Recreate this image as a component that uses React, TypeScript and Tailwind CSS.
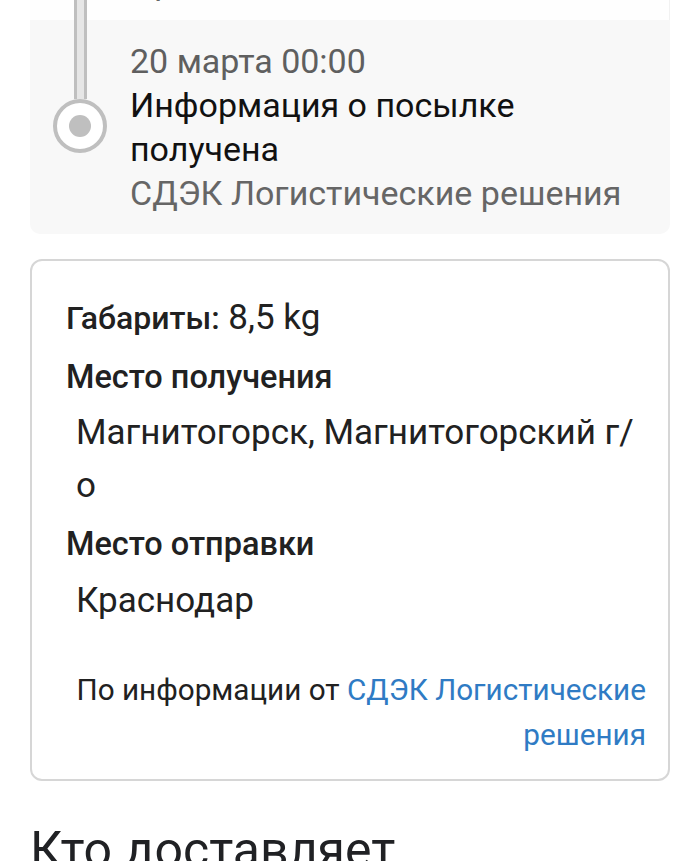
import React from 'react';

const font = { fontFamily: 'Roboto, "Noto Sans", sans-serif' };

function TimelineRail({ withDot, dotOffset }: { withDot: boolean; dotOffset?: number }) {
  return (
    <div className="w-[100px] shrink-0 flex flex-col items-center">
      <div
        className="w-[13px] border-x-[3px] border-[#bfbfbf] bg-[#e6e6e6] ml-[1px]"
        style={{ height: withDot ? dotOffset : '100%' }}
      />
      {withDot && (
        <div className="w-[54px] h-[54px] rounded-full border-[4px] border-[#bfbfbf] bg-white flex items-center justify-center">
          <div className="w-[22px] h-[22px] rounded-full bg-[#bfbfbf]" />
        </div>
      )}
    </div>
  );
}

export default function App() {
  return (
    <div className="min-h-screen bg-white overflow-hidden" style={font}>
      <div className="px-[30px] w-[700px]">
        {/* previous event, mostly scrolled out */}
        <div className="flex bg-[#fefefe] border-r border-[#f1f1f1] -mt-[40px] h-[60px]">
          <TimelineRail withDot={false} />
          <div className="text-[34px] leading-[44px] text-[#666]">Принята в отделении</div>
        </div>

        {/* current event */}
        <div className="flex bg-[#f8f8f8] rounded-b-[10px]">
          <TimelineRail withDot dotOffset={79} />
          <div className="pt-[19px] pb-[19px] text-[34px] leading-[44px]">
            <div className="text-[#5f5f5f]">20 марта 00:00</div>
            <div className="text-[#111]">
              Информация о посылке
              <br />
              получена
            </div>
            <div className="text-[#666]">СДЭК Логистические решения</div>
          </div>
        </div>

        {/* parcel details */}
        <div className="mt-[25px] border-2 border-[#d6d6d6] rounded-[12px] pl-[34px] pr-[22px] pt-[30px] pb-[22px] text-[#212121]">
          <div className="text-[35px] leading-[53px]">
            <span className="font-medium text-[32px]">Габариты:</span> 8,5 kg
          </div>
          <div className="mt-[6px] text-[32.5px] leading-[53px] font-medium">Место получения</div>
          <div className="mt-[2px] pl-[10px] text-[35px] leading-[53px]">
            Магнитогорск, Магнитогорский г/
            <br />о
          </div>
          <div className="mt-[6px] text-[32.5px] leading-[53px] font-medium">Место отправки</div>
          <div className="mt-[3px] pl-[10px] text-[35px] leading-[53px]">Краснодар</div>
          <div className="mt-[40px] text-right text-[29.7px] leading-[45px]">
            По информации от{' '}
            <span className="text-[#2f7bc4]">
              СДЭК Логистические
              <br />
              решения
            </span>
          </div>
        </div>

        <h2 className="mt-[41px] text-[50px] leading-[56px] text-[#202124] font-normal">Кто доставляет</h2>
      </div>
    </div>
  );
}
